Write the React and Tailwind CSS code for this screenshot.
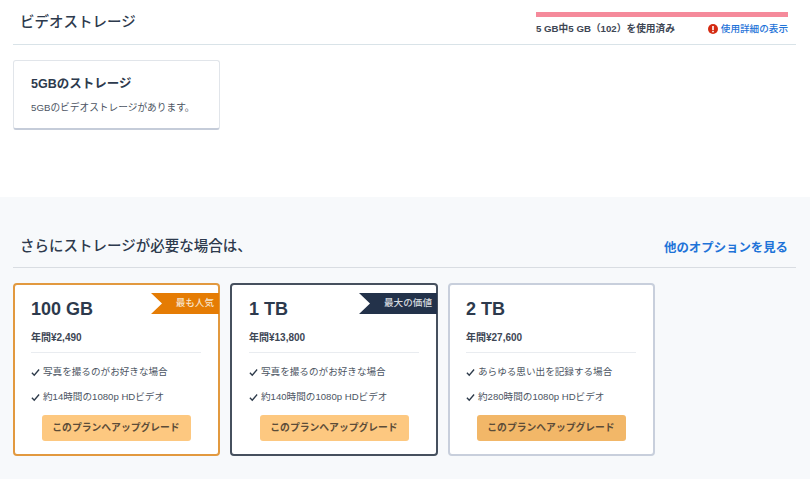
import React from 'react';

const font = "font-['Liberation_Sans','Noto_Sans_CJK_JP',sans-serif]";

const Check = () => (
    <svg width="9" height="9" viewBox="0 0 10 9" fill="none" className="shrink-0">
        <path d="M1 4.8 L3.6 7.6 L9 1.2" stroke="#2d3a4a" strokeWidth="1.5" />
    </svg>
);

const plans = [
    {
        size: '100 GB',
        price: '年間¥2,490',
        border: 'border-[#e2993f]',
        width: 'w-[207px]',
        pad: 'pl-[16px]',
        ribbon: '最も人気',
        ribbonBg: 'bg-[#e57c04]',
        ribbonText: 'text-[#f7e2c8]',
        ribbonWidth: 'w-[68px]',
        button: 'bg-[#fdc880]',
        features: ['写真を撮るのがお好きな場合', '約14時間の1080p HDビデオ'],
    },
    {
        size: '1 TB',
        price: '年間¥13,800',
        border: 'border-[#46505e]',
        width: 'w-[208px]',
        pad: 'pl-[17px]',
        ribbon: '最大の価値',
        ribbonBg: 'bg-[#23324a]',
        ribbonText: 'text-[#d5d9df]',
        ribbonWidth: 'w-[78px]',
        button: 'bg-[#fdc880]',
        features: ['写真を撮るのがお好きな場合', '約140時間の1080p HDビデオ'],
    },
    {
        size: '2 TB',
        price: '年間¥27,600',
        border: 'border-[#c8cfdc]',
        width: 'w-[207px]',
        pad: 'pl-[16px]',
        button: 'bg-[#f2b768]',
        features: ['あらゆる思い出を記録する場合', '約280時間の1080p HDビデオ'],
    },
];

const PlanCard = ({ plan }) => (
    <div className={`relative ${plan.width} h-[173px] bg-white border-2 rounded-[4px] ${plan.border} ${plan.pad} pr-[17px]`}>
        {plan.ribbon && (
            <div className={`absolute top-[8px] right-[-1px] h-[21px] ${plan.ribbonWidth} ${plan.ribbonBg} ${plan.ribbonText} [clip-path:polygon(0_0,100%_0,100%_100%,0_100%,11px_50%)] flex items-center justify-end pr-[5px] text-[9.6px] font-medium`}>
                {plan.ribbon}
            </div>
        )}
        <div className="mt-[12px] text-[18px] leading-[24px] font-bold text-[#2d3a4d]">{plan.size}</div>
        <div className="mt-[10px] text-[10px] leading-[14px] font-bold text-[#3d4654]">{plan.price}</div>
        <div className="mt-[7px] h-px bg-[#e9ecf0]" />
        <ul className="mt-[12px] flex flex-col gap-[11px]">
            {plan.features.map((f) => (
                <li key={f} className="flex items-center gap-[3px] h-[14px] text-[9.6px] text-[#4c5563]">
                    <Check />
                    <span>{f}</span>
                </li>
            ))}
        </ul>
        <div className="mt-[11px] flex justify-center">
            <div className={`w-[149px] h-[26px] rounded-[3px] ${plan.button} flex items-center justify-center text-[9.8px] font-bold text-[#5c4c38]`}>
                このプランへアップグレード
            </div>
        </div>
    </div>
);

export default function App() {
    return (
        <div className={`${font} w-[810px] h-[479px] overflow-hidden bg-white`}>
            <section className="h-[197px] pl-[13px] pr-[14px]">
                <div className="h-[45px] border-b border-[#d9e3e8] flex justify-between">
                    <h1 className="pl-[7px] pt-[12px] text-[14.5px] leading-[20px] font-medium text-[#2d3a4d]">ビデオストレージ</h1>
                    <div className="w-[260px] pr-[8px] pt-[12px]">
                        <div className="h-[5px] bg-[#f58a9b]" />
                        <div className="mt-[4px] flex justify-between items-center h-[16px]">
                            <span className="text-[9.7px] font-bold text-[#3d4654]">5 GB中5 GB（102）を使用済み</span>
                            <span className="flex items-center gap-[3px] text-[9.6px] font-medium text-[#1e73d8]">
                                <svg width="10" height="10" viewBox="0 0 10 10">
                                    <circle cx="5" cy="5" r="5" fill="#d42b12" />
                                    <rect x="4.2" y="2" width="1.6" height="4" fill="#fff" />
                                    <rect x="4.2" y="6.8" width="1.6" height="1.5" fill="#fff" />
                                </svg>
                                使用詳細の表示
                            </span>
                        </div>
                    </div>
                </div>
                <div className="mt-[15px] w-[207px] h-[70px] bg-white border border-[#e1e5ea] border-b-2 border-b-[#c5ccd9] rounded-[3px] pl-[17px]">
                    <div className="mt-[14px] text-[12.5px] leading-[18px] font-bold text-[#2d3a4d]">5GBのストレージ</div>
                    <div className="mt-[8px] text-[9.7px] leading-[14px] text-[#4c5563]">5GBのビデオストレージがあります。</div>
                </div>
            </section>
            <section className="h-[282px] bg-[#f7f9fb] pl-[13px] pr-[14px]">
                <div className="h-[71px] border-b border-[#d9dde2] flex justify-between items-start pt-[39px]">
                    <h2 className="pl-[7px] text-[14.5px] leading-[20px] font-medium text-[#2d3a4d]">さらにストレージが必要な場合は、</h2>
                    <span className="pr-[8px] pt-[2px] text-[12.4px] leading-[20px] font-bold text-[#1e73d8]">他のオプションを見る</span>
                </div>
                <div className="mt-[15px] flex gap-[10px]">
                    {plans.map((p) => (
                        <PlanCard key={p.size} plan={p} />
                    ))}
                </div>
            </section>
        </div>
    );
}
